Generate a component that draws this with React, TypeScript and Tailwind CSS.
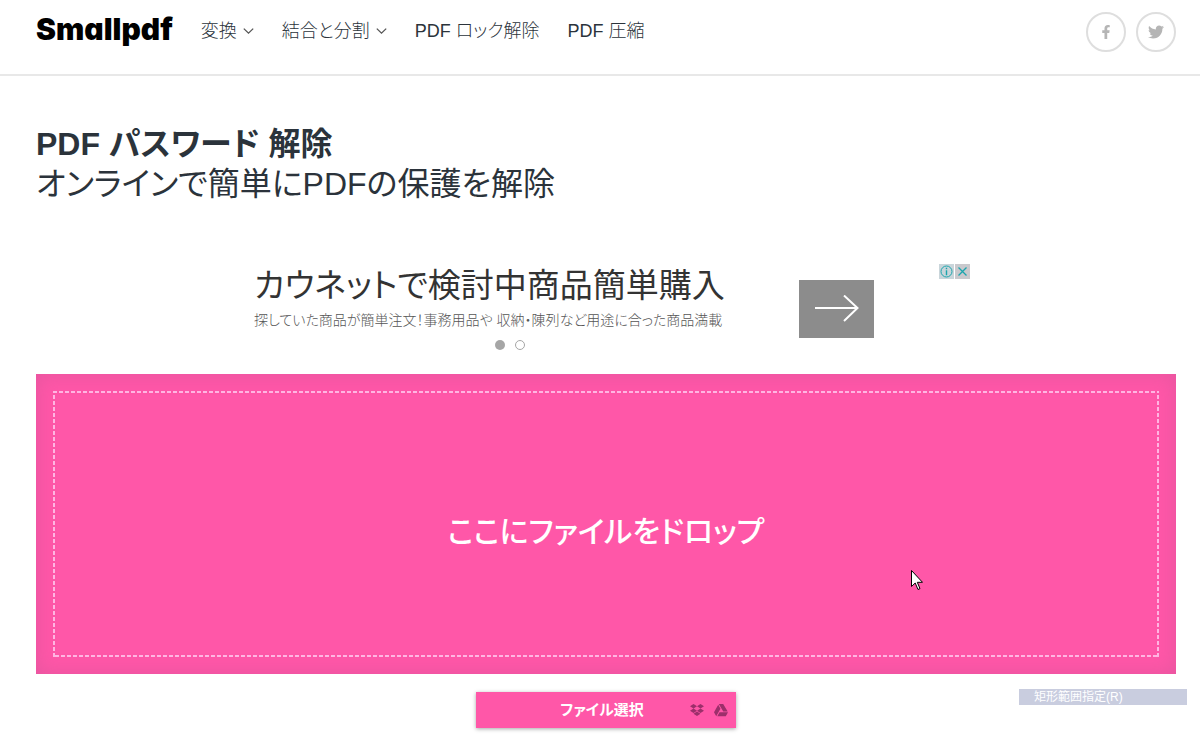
import React from "react";
import { FaFacebookF, FaTwitter, FaDropbox, FaGoogleDrive } from "react-icons/fa";

interface NavItem {
  label: string;
  hasMenu?: boolean;
}

const navItems: NavItem[] = [
  { label: "変換", hasMenu: true },
  { label: "結合と分割", hasMenu: true },
  { label: "PDF ロック解除" },
  { label: "PDF 圧縮" },
];

const Chevron: React.FC = () => (
  <svg className="h-1.5 w-[11px]" viewBox="0 0 11 6" fill="none" stroke="#555" strokeWidth="1.300">
    <path d="M.8.6l4.700 4.500L10.200.6" />
  </svg>
);

const Header: React.FC = () => (
  <header className="flex items-start justify-between border-b-2 border-[#e8e8e8] pl-9 pr-6 h-[76px]">
    <div className="flex items-start">
      <a
        href="#"
        className="mr-7 pt-[9px] text-[30px] leading-10 font-black text-black font-['Inter',sans-serif] [font-feature-settings:'cv11']"
      >
        Smallpdf
      </a>
      <nav className="flex gap-7 pt-[19px]">
        {navItems.map((item) => (
          <a key={item.label} href="#" className="flex items-center gap-1.5 text-lg leading-6 font-light">
            {item.label}
            {item.hasMenu && <Chevron />}
          </a>
        ))}
      </nav>
    </div>
    <div className="flex gap-2.5 pt-3">
      <a
        href="#"
        aria-label="Facebook"
        className="flex size-10 items-center justify-center rounded-full border-2 border-[#dedede] text-[#b5b5b5]"
      >
        <FaFacebookF className="size-3.5" />
      </a>
      <a
        href="#"
        aria-label="Twitter"
        className="flex size-10 items-center justify-center rounded-full border-2 border-[#dedede] text-[#b5b5b5]"
      >
        <FaTwitter className="size-4" />
      </a>
    </div>
  </header>
);

const AdBanner: React.FC = () => (
  <aside className="mx-auto mt-[60px] flex h-[90px] max-w-[728px] justify-between">
    <div className="w-[500px] pl-3">
      <p className="text-[33px] leading-[44px] whitespace-nowrap text-[#333]">
        カウネットで検討中商品簡単購入
      </p>
      <p className="text-sm leading-6 font-light whitespace-nowrap text-[#555]">
        探していた商品が簡単注文！事務用品や 収納・陳列など用途に合った商品満載
      </p>
      <div className="mt-2 flex justify-center gap-2.5 pl-6">
        <button aria-label="1" className="size-2.5 rounded-full bg-[#a6a6a6]" />
        <button aria-label="2" className="size-2.5 rounded-full border border-[#a6a6a6]" />
      </div>
    </div>
    <div className="flex gap-[65px]">
      <button aria-label="開く" className="mt-4 flex h-[58px] w-[75px] items-center justify-center bg-[#8c8c8c]">
        <svg className="h-7 w-11" viewBox="0 0 44 28" fill="none" stroke="#fff" strokeWidth="2">
          <path d="M0 13h43M29 .5L42.500 13L29 26" />
        </svg>
      </button>
      <div className="flex gap-px">
        <button aria-label="広告情報" className="size-[15px] bg-[#c9d5da]">
          <svg viewBox="0 0 15 15" fill="none" stroke="#1ba5ad">
            <circle cx="7.500" cy="7.500" r="5.500" />
            <path d="M7.500 3.800v1.400M7.500 6.300v5" strokeWidth="1.400" />
          </svg>
        </button>
        <button aria-label="閉じる" className="size-[15px] bg-[#c9c9cd]">
          <svg viewBox="0 0 15 15" fill="none" stroke="#1ba5ad" strokeWidth="1.300">
            <path d="M3.500 3.500l8 8M11.500 3.500l-8 8" />
          </svg>
        </button>
      </div>
    </div>
  </aside>
);

const DropZone: React.FC = () => (
  <section className="relative mt-5 bg-[#ff57a8] p-[17px] shadow-[inset_0_0_20px_rgba(150,80,130,0.25)]">
    <div className="relative flex h-[266px] items-center justify-center">
      {/* finer dashes than a css border gives */}
      <svg className="absolute inset-0 size-full overflow-hidden" aria-hidden="true">
        <rect width="100%" height="100%" fill="none" stroke="#ffb5e2" strokeWidth="4" strokeDasharray="4 2" />
      </svg>
      <p className="pt-4 text-[30px] leading-10 font-medium text-white">ここにファイルをドロップ</p>
    </div>
    {/* mouse pointer */}
    <svg className="absolute top-[196px] left-[875px] h-[21px] w-3" viewBox="0 0 12 21" aria-hidden="true">
      <path
        d="M.5.5v16l3.700-3.500 2.800 6.500 2-.9-2.700-6.300h5.200z"
        fill="#fff"
        stroke="#000"
      />
    </svg>
  </section>
);

const App: React.FC = () => {
  return (
    <div className="min-h-screen overflow-x-hidden bg-white text-[#2b333b] [font-feature-settings:'palt'] font-['Liberation_Sans','Noto_Sans_CJK_JP',sans-serif]">
      <Header />
      <main className="pl-9 pr-6 pt-12">
        <h1 className="text-[32px] leading-10 font-bold">PDF パスワード 解除</h1>
        <h2 className="text-[32px] leading-10">オンラインで簡単にPDFの保護を解除</h2>
        <AdBanner />
        <DropZone />
        <div className="relative flex justify-center pt-[18px] pb-3">
          <button className="relative h-9 w-[260px] bg-[#ff57a8] pr-2 text-[15px] font-bold text-white shadow-[0_1px_4px_rgba(0,0,0,0.35)]">
            ファイル選択
            <span className="absolute inset-y-0 right-2 flex items-center gap-2.5 text-[#9c2f6b]">
              <FaDropbox className="size-3.5" />
              <FaGoogleDrive className="size-3.5" />
            </span>
          </button>
          <button className="absolute top-[15px] right-[-11px] h-4 w-[168px] bg-[#c9cddf] pl-[15px] text-left text-xs leading-[14px] text-white">
            矩形範囲指定(R)
          </button>
        </div>
      </main>
    </div>
  );
};

export default App;
